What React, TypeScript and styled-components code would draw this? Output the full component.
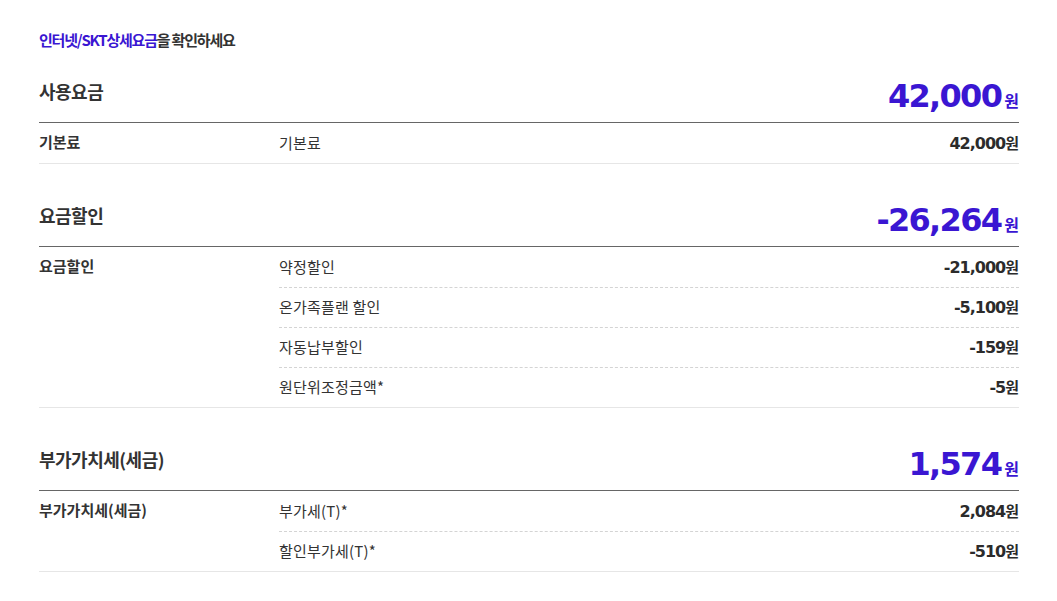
import React from "react";
import styled, { createGlobalStyle } from "styled-components";

const GlobalStyle = createGlobalStyle`
  html, body { margin: 0; padding: 0; background: #fff; }
  body { font-family: "Noto Sans CJK KR", "Noto Sans", sans-serif; color: #333; }
  * { box-sizing: border-box; }
`;

const PURPLE = "#3a16d2";

const Page = styled.div`
  padding: 30px 38px 30px 39px;
`;

const Title = styled.h1`
  margin: 0;
  font-size: 15px;
  line-height: 20px;
  font-weight: 700;
  letter-spacing: -1.2px;
  color: #333;
  span { color: ${PURPLE}; }
`;

const Section = styled.section<{ $first?: boolean }>`
  margin-top: ${(p) => (p.$first ? "26px" : "36px")};
`;

const SectionHeader = styled.div`
  display: flex;
  justify-content: space-between;
  align-items: center;
  padding-bottom: 2px;
  border-bottom: 1px solid #666;
`;

const Heading = styled.h2`
  margin: 0 0 14px;
  font-size: 18px;
  line-height: 24px;
  font-weight: 700;
  letter-spacing: -0.5px;
  color: #333;
`;

const Total = styled.div`
  display: flex;
  align-items: baseline;
  color: ${PURPLE};
  line-height: 40px;
`;

const TotalNum = styled.span`
  font-family: "DejaVu Sans", Verdana, sans-serif;
  font-weight: 700;
  font-size: 32px;
  letter-spacing: -1.7px;
`;

const Won = styled.span<{ $big?: boolean }>`
  font-family: "Noto Sans CJK KR", sans-serif;
  font-weight: 700;
  font-size: ${(p) => (p.$big ? "16px" : "15px")};
  margin-left: ${(p) => (p.$big ? "3px" : "0")};
  letter-spacing: 0;
`;

const Group = styled.div`
  display: grid;
  grid-template-columns: 240px 1fr;
  border-bottom: 1px solid #e6e6e6;
`;

const GroupLabel = styled.div`
  font-size: 15px;
  line-height: 38px;
  font-weight: 700;
  letter-spacing: 0;
  color: #333;
`;

const Items = styled.div`
  display: flex;
  flex-direction: column;
`;

const Item = styled.div`
  display: flex;
  justify-content: space-between;
  align-items: center;
  height: 40px;
  padding-bottom: 2px;
  & + & {
    border-top: 1px dashed #d4d4d4;
  }
`;

const ItemName = styled.span`
  font-size: 15px;
  letter-spacing: 0.2px;
  color: #333;
`;

const Amount = styled.span`
  display: flex;
  align-items: baseline;
  color: #2b2b2b;
`;

const AmountNum = styled.span`
  font-family: "DejaVu Sans", Verdana, sans-serif;
  font-weight: 700;
  font-size: 16px;
  letter-spacing: -1px;
`;

type Row = { name: string; amount: string };
type Sec = { title: string; total: string; label: string; rows: Row[] };

const sections: Sec[] = [
  { title: "사용요금", total: "42,000", label: "기본료", rows: [{ name: "기본료", amount: "42,000" }] },
  {
    title: "요금할인",
    total: "-26,264",
    label: "요금할인",
    rows: [
      { name: "약정할인", amount: "-21,000" },
      { name: "온가족플랜 할인", amount: "-5,100" },
      { name: "자동납부할인", amount: "-159" },
      { name: "원단위조정금액*", amount: "-5" },
    ],
  },
  {
    title: "부가가치세(세금)",
    total: "1,574",
    label: "부가가치세(세금)",
    rows: [
      { name: "부가세(T)*", amount: "2,084" },
      { name: "할인부가세(T)*", amount: "-510" },
    ],
  },
];

export default function App() {
  return (
    <>
      <GlobalStyle />
      <Page>
        <Title>
          <span>인터넷/SKT상세요금</span>을 확인하세요
        </Title>
        {sections.map((s, i) => (
          <Section key={s.title} $first={i === 0}>
            <SectionHeader>
              <Heading>{s.title}</Heading>
              <Total>
                <TotalNum>{s.total}</TotalNum>
                <Won $big>원</Won>
              </Total>
            </SectionHeader>
            <Group>
              <GroupLabel>{s.label}</GroupLabel>
              <Items>
                {s.rows.map((r) => (
                  <Item key={r.name}>
                    <ItemName>{r.name}</ItemName>
                    <Amount>
                      <AmountNum>{r.amount}</AmountNum>
                      <Won>원</Won>
                    </Amount>
                  </Item>
                ))}
              </Items>
            </Group>
          </Section>
        ))}
      </Page>
    </>
  );
}
